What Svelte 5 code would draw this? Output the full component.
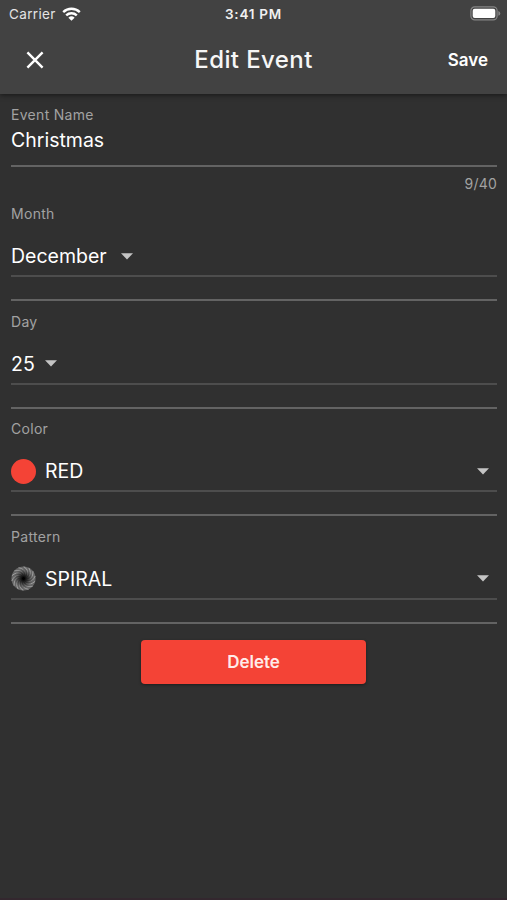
<script lang="ts">
  interface Field {
    label: string;
    value: string;
    icon?: 'color' | 'spiral';
    size?: 'compact' | 'tight';
  }

  const fields: Field[] = [
    { label: 'Month', value: 'December', size: 'compact' },
    { label: 'Day', value: '25', size: 'tight' },
    { label: 'Color', value: 'RED', icon: 'color' },
    { label: 'Pattern', value: 'SPIRAL', icon: 'spiral' },
  ];

  const maxLength = 40;
  let name = $state('Christmas');

  const blades = Array.from({ length: 14 }, (_, i) => (i * 360) / 14);
</script>

<div class="screen">
  <header class="header">
    <div class="status">
      <div class="carrier">
        <span>Carrier</span>
        <svg class="wifi" width="19" height="14" viewBox="0 0 19 14">
          <g fill="none" stroke="#fff" stroke-width="2.4">
            <path d="M1.2 5.1a12 12 0 0 1 16.6 0" />
            <path d="M4.2 8.4a7.6 7.6 0 0 1 10.6 0" />
          </g>
          <path d="M6.4 10.7a4.5 4.5 0 0 1 6.2 0L9.5 13.8z" fill="#fff" />
        </svg>
      </div>
      <span class="time">3:41 PM</span>
      <svg class="battery" width="31" height="15" viewBox="0 0 31 15">
        <rect x="0.9" y="0.9" width="26.2" height="13" rx="3.8" fill="none" stroke="#858585" stroke-width="1.2" />
        <rect x="2.7" y="2.7" width="22.6" height="9.4" rx="2" fill="#fff" />
        <path d="M28.3 5q2 .8 2 2.4t-2 2.4z" fill="#858585" />
      </svg>
    </div>
    <div class="toolbar">
      <button class="close" aria-label="Close">
        <svg width="18" height="18" viewBox="0 0 18 18">
          <path d="M1.4 1.4l15.2 15.2M16.6 1.4L1.4 16.6" stroke="#fff" stroke-width="2.4" />
        </svg>
      </button>
      <h1 class="title">Edit Event</h1>
      <button class="save">Save</button>
    </div>
  </header>

  <main class="form">
    <label class="name-field">
      <span class="label">Event Name</span>
      <input class="name" bind:value={name} maxlength={maxLength} />
      <span class="counter">{name.length}/{maxLength}</span>
    </label>

    {#each fields as field}
      <div class="field">
        <span class="label">{field.label}</span>
        <button class="select {field.size ?? ''}">
          {#if field.icon === 'color'}
            <span class="swatch"></span>
          {:else if field.icon === 'spiral'}
            <svg class="icon" width="25" height="25" viewBox="0 0 25 25">
              <defs>
                <radialGradient id="hole">
                  <stop offset="0.08" stop-color="#000" />
                  <stop offset="0.35" stop-color="#111" stop-opacity="0.75" />
                  <stop offset="0.8" stop-color="#222" stop-opacity="0" />
                </radialGradient>
              </defs>
              <circle cx="12.5" cy="12.5" r="12.1" fill="#666" />
              {#each blades as angle}
                <path
                  class="blade"
                  d="M12.5 12.5C16 9.5 15.5 3 7.5 1.7"
                  transform="rotate({angle} 12.5 12.5)"
                />
              {/each}
              <circle cx="12.5" cy="12.5" r="12.2" fill="url(#hole)" />
            </svg>
          {/if}
          <span class="value">{field.value}</span>
          <svg class="arrow" width="12" height="7" viewBox="0 0 12 7">
            <path d="M0 .3h12L6 6.5z" fill="#c4c4c4" />
          </svg>
        </button>
      </div>
    {/each}

    <button class="delete">Delete</button>
  </main>
</div>

<style>
  :global(body) {
    margin: 0;
    background: #303030;
  }

  .screen {
    box-sizing: border-box;
    height: 900px;
    display: flex;
    flex-direction: column;
    background: #303030;
    border-bottom: 2px solid #33272e;
    color: #fff;
    font-family: Inter, 'Liberation Sans', sans-serif;
    overflow: hidden;
  }

  button {
    background: none;
    border: none;
    padding: 0;
    color: inherit;
    font-family: inherit;
    cursor: pointer;
  }

  .header {
    height: 94px;
    background: #424242;
    box-shadow: 0 1px 5px rgba(0, 0, 0, 0.55);
  }

  .status {
    display: grid;
    grid-template-columns: 1fr auto 1fr;
    align-items: center;
    height: 27px;
    padding: 0 6px;
    font-size: 13.5px;
  }

  .carrier {
    display: flex;
    align-items: center;
    gap: 6px;
    padding-left: 3px;
    color: #e4e4e4;
    letter-spacing: 0.35px;
  }

  .time {
    font-size: 13.5px;
    font-weight: 600;
    letter-spacing: 0.75px;
    color: #f0f0f0;
  }

  .battery {
    justify-self: end;
  }

  .toolbar {
    display: grid;
    grid-template-columns: 1fr auto 1fr;
    align-items: center;
    height: 65px;
    padding: 0 19px;
  }

  .close {
    display: flex;
    justify-self: start;
    margin-left: 7px;
  }

  .title {
    margin: 0;
    font-size: 24px;
    font-weight: 500;
    letter-spacing: 0.4px;
    color: #f6f6f6;
  }

  .save {
    justify-self: end;
    font-size: 17px;
    font-weight: 600;
  }

  .form {
    flex: 1;
    display: flex;
    flex-direction: column;
    padding: 11px 10px 0 11px;
  }

  .name-field {
    display: flex;
    flex-direction: column;
    height: 99px;
  }

  .label {
    font-size: 14px;
    line-height: 20px;
    letter-spacing: 0.3px;
    color: #a2a2a2;
  }

  .name {
    box-sizing: border-box;
    height: 42px;
    padding: 1px 0 11px;
    background: none;
    border: none;
    border-bottom: 2px solid #636363;
    border-radius: 0;
    outline: none;
    color: #fff;
    font-family: inherit;
    font-size: 19.5px;
  }

  .counter {
    align-self: flex-end;
    margin-top: 7px;
    font-size: 14px;
    line-height: 20px;
    letter-spacing: 0.2px;
    color: #a2a2a2;
  }

  .field {
    box-sizing: border-box;
    display: flex;
    flex-direction: column;
    height: 97px;
    margin-bottom: 10.5px;
    border-bottom: 2px solid #636363;
  }

  .select {
    box-sizing: border-box;
    display: flex;
    align-items: center;
    height: 41px;
    margin-top: 12px;
    padding: 1px 8px 0 0;
    border-bottom: 2px solid #4d4d4d;
    font-size: 19.5px;
    text-align: left;
  }

  .swatch {
    width: 25px;
    height: 25px;
    margin-right: 9px;
    border-radius: 50%;
    background: #f44336;
  }

  .icon {
    margin-right: 9px;
  }

  .blade {
    fill: none;
    stroke: #a0a0a0;
    stroke-width: 0.9;
  }

  .value {
    flex: 1;
  }

  .compact .value {
    flex: none;
    margin-right: 14px;
  }

  .tight .value {
    flex: none;
    margin-right: 10px;
  }

  .delete {
    align-self: center;
    width: 225px;
    height: 44px;
    margin: 6px 1px 0 0;
    border-radius: 4px;
    background: #f44336;
    box-shadow: 0 1px 3px rgba(0, 0, 0, 0.4);
    color: #ffebe9;
    font-size: 17px;
    font-weight: 600;
  }
</style>
